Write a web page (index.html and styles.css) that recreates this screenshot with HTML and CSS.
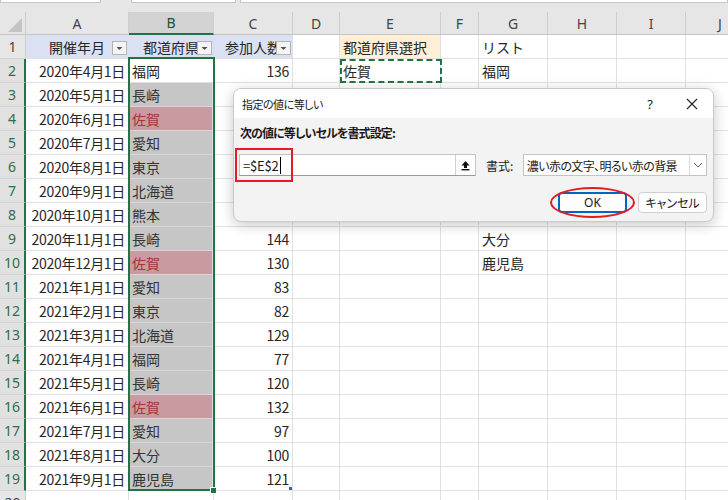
FILE: index.html
```html
<!DOCTYPE html>
<html lang="ja">
<head>
<meta charset="utf-8">
<link rel="stylesheet" href="styles.css">
</head>
<body>
<div class="page">
  <div class="topbar">
    <div class="tb tb1"></div>
    <div class="tb tb2"></div>
    <div class="tb tb3"></div>
  </div>
  <div class="sheet">
    <div class="corner"><svg width="26" height="23" viewBox="0 0 26 23"><polygon points="22,6 22,20 8,20" fill="#c4c4c4"/></svg></div>
    <div class="ch">A</div><div class="ch chs">B</div><div class="ch">C</div><div class="ch">D</div><div class="ch">E</div><div class="ch">F</div><div class="ch">G</div><div class="ch">H</div><div class="ch">I</div><div class="ch">J</div>

    <div class="rh">1</div>
    <div class="c th">開催年月<span class="flt"><svg width="13" height="12" viewBox="0 0 13 12"><polygon points="3.5,5 9.5,5 6.5,8" fill="#555"/></svg></span></div>
    <div class="c th">都道府県<span class="flt"><svg width="13" height="12" viewBox="0 0 13 12"><polygon points="3.5,5 9.5,5 6.5,8" fill="#555"/></svg></span></div>
    <div class="c th">参加人数<span class="flt"><svg width="13" height="12" viewBox="0 0 13 12"><polygon points="3.5,5 9.5,5 6.5,8" fill="#555"/></svg></span></div>
    <div class="c"></div><div class="c sel-hd">都道府県選択</div><div class="c"></div><div class="c">リスト</div><div class="c"></div><div class="c"></div><div class="c"></div>

    <div class="rh s">2</div><div class="c r">2020年4月1日</div><div class="c">福岡</div><div class="c r">136</div><div class="c"></div><div class="c">佐賀</div><div class="c"></div><div class="c">福岡</div><div class="c"></div><div class="c"></div><div class="c"></div>
    <div class="rh s">3</div><div class="c r">2020年5月1日</div><div class="c g">長崎</div><div class="c r"></div><div class="c"></div><div class="c"></div><div class="c"></div><div class="c">長崎</div><div class="c"></div><div class="c"></div><div class="c"></div>
    <div class="rh s">4</div><div class="c r">2020年6月1日</div><div class="c g red">佐賀</div><div class="c r"></div><div class="c"></div><div class="c"></div><div class="c"></div><div class="c"></div><div class="c"></div><div class="c"></div><div class="c"></div>
    <div class="rh s">5</div><div class="c r">2020年7月1日</div><div class="c g">愛知</div><div class="c r"></div><div class="c"></div><div class="c"></div><div class="c"></div><div class="c"></div><div class="c"></div><div class="c"></div><div class="c"></div>
    <div class="rh s">6</div><div class="c r">2020年8月1日</div><div class="c g">東京</div><div class="c r"></div><div class="c"></div><div class="c"></div><div class="c"></div><div class="c"></div><div class="c"></div><div class="c"></div><div class="c"></div>
    <div class="rh s">7</div><div class="c r">2020年9月1日</div><div class="c g">北海道</div><div class="c r"></div><div class="c"></div><div class="c"></div><div class="c"></div><div class="c"></div><div class="c"></div><div class="c"></div><div class="c"></div>
    <div class="rh s">8</div><div class="c r">2020年10月1日</div><div class="c g">熊本</div><div class="c r"></div><div class="c"></div><div class="c"></div><div class="c"></div><div class="c"></div><div class="c"></div><div class="c"></div><div class="c"></div>
    <div class="rh s">9</div><div class="c r">2020年11月1日</div><div class="c g">長崎</div><div class="c r">144</div><div class="c"></div><div class="c"></div><div class="c"></div><div class="c">大分</div><div class="c"></div><div class="c"></div><div class="c"></div>
    <div class="rh s">10</div><div class="c r">2020年12月1日</div><div class="c g red">佐賀</div><div class="c r">130</div><div class="c"></div><div class="c"></div><div class="c"></div><div class="c">鹿児島</div><div class="c"></div><div class="c"></div><div class="c"></div>
    <div class="rh s">11</div><div class="c r">2021年1月1日</div><div class="c g">愛知</div><div class="c r">83</div><div class="c"></div><div class="c"></div><div class="c"></div><div class="c"></div><div class="c"></div><div class="c"></div><div class="c"></div>
    <div class="rh s">12</div><div class="c r">2021年2月1日</div><div class="c g">東京</div><div class="c r">82</div><div class="c"></div><div class="c"></div><div class="c"></div><div class="c"></div><div class="c"></div><div class="c"></div><div class="c"></div>
    <div class="rh s">13</div><div class="c r">2021年3月1日</div><div class="c g">北海道</div><div class="c r">129</div><div class="c"></div><div class="c"></div><div class="c"></div><div class="c"></div><div class="c"></div><div class="c"></div><div class="c"></div>
    <div class="rh s">14</div><div class="c r">2021年4月1日</div><div class="c g">福岡</div><div class="c r">77</div><div class="c"></div><div class="c"></div><div class="c"></div><div class="c"></div><div class="c"></div><div class="c"></div><div class="c"></div>
    <div class="rh s">15</div><div class="c r">2021年5月1日</div><div class="c g">長崎</div><div class="c r">120</div><div class="c"></div><div class="c"></div><div class="c"></div><div class="c"></div><div class="c"></div><div class="c"></div><div class="c"></div>
    <div class="rh s">16</div><div class="c r">2021年6月1日</div><div class="c g red">佐賀</div><div class="c r">132</div><div class="c"></div><div class="c"></div><div class="c"></div><div class="c"></div><div class="c"></div><div class="c"></div><div class="c"></div>
    <div class="rh s">17</div><div class="c r">2021年7月1日</div><div class="c g">愛知</div><div class="c r">97</div><div class="c"></div><div class="c"></div><div class="c"></div><div class="c"></div><div class="c"></div><div class="c"></div><div class="c"></div>
    <div class="rh s">18</div><div class="c r">2021年8月1日</div><div class="c g">大分</div><div class="c r">100</div><div class="c"></div><div class="c"></div><div class="c"></div><div class="c"></div><div class="c"></div><div class="c"></div><div class="c"></div>
    <div class="rh s">19</div><div class="c r">2021年9月1日</div><div class="c g">鹿児島</div><div class="c r">121<span class="tmark"></span></div><div class="c"></div><div class="c"></div><div class="c"></div><div class="c"></div><div class="c"></div><div class="c"></div><div class="c"></div>
    <div class="rh">20</div><div class="c"></div><div class="c"></div><div class="c"></div><div class="c"></div><div class="c"></div><div class="c"></div><div class="c"></div><div class="c"></div><div class="c"></div><div class="c"></div>
  </div>

  <div class="selbox"></div>
  <div class="fillh"></div>
  <div class="ants"></div>

  <div class="dlg">
    <div class="dlg-title">
      <span class="dlg-name">指定の値に等しい</span>
      <span class="dlg-q">?</span>
      <svg class="dlg-x" width="12" height="12" viewBox="0 0 12 12"><path d="M1 1 L11 11 M11 1 L1 11" stroke="#222" stroke-width="1.1"/></svg>
    </div>
    <div class="dlg-body">
      <div class="dlg-lbl">次の値に等しいセルを書式設定:</div>
      <div class="dlg-row">
        <div class="inp">
          <span class="inp-text">=$E$2</span><span class="caret"></span>
          <span class="refbtn"><svg width="11" height="11" viewBox="0 0 11 11"><path d="M5.5 1 L9.5 5.5 L7 5.5 L7 8 L4 8 L4 5.5 L1.5 5.5 Z" fill="#111"/><rect x="1.5" y="9" width="8" height="1.4" fill="#111"/></svg></span>
        </div>
        <span class="fmt-lbl">書式:</span>
        <div class="sel">
          <span class="sel-text">濃い赤の文字、明るい赤の背景</span>
          <span class="chev"><svg width="10" height="6" viewBox="0 0 10 6"><path d="M1 1 L5 5 L9 1" fill="none" stroke="#666" stroke-width="1"/></svg></span>
        </div>
      </div>
      <div class="dlg-btns">
        <span class="btn btn-ok">OK</span>
        <span class="btn">キャンセル</span>
      </div>
    </div>
  </div>

  <div class="anno-rect"></div>
  <div class="anno-ell"></div>
</div>
</body>
</html>
```
FILE: styles.css
```css
* { box-sizing: border-box; }
html, body { margin: 0; padding: 0; background: #fff; }
body { width: 728px; height: 500px; overflow: hidden; }
.page {
  position: relative;
  width: 728px;
  height: 500px;
  overflow: hidden;
  font-family: "Noto Sans CJK JP", sans-serif;
  color: #262626;
}
.topbar {
  height: 12px;
  background: #e6e6e6;
  display: flex;
  align-items: flex-start;
}
.tb {
  height: 3px;
  background: #fff;
  border: 1px solid #c6c6c6;
  border-top: none;
}
.tb1 { width: 101px; }
.tb2 { width: 105px; margin-left: 30px; }
.tb3 { flex: 1; margin-left: 4px; }

.sheet {
  display: grid;
  grid-template-columns: 26px 103px 85px 79px 47px 101px 38px 69px 69px 69px 69px;
  grid-template-rows: 23px repeat(20, 24px);
  width: 755px;
}
.corner {
  background: #e6e6e6;
  border-right: 1px solid #cfcfcf;
  border-bottom: 1px solid #c4c4c4;
}
.corner svg { display: block; }
.ch {
  background: #e6e6e6;
  border-right: 1px solid #cfcfcf;
  border-bottom: 1px solid #c4c4c4;
  display: flex;
  align-items: center;
  justify-content: center;
  font-family: "Noto Sans", sans-serif;
  font-size: 14px;
  color: #444;
}
.chs {
  background: #d2d2d2;
  border-bottom: 2px solid #217346;
  color: #1d4f33;
}
.rh {
  background: #e6e6e6;
  border-right: 1px solid #cfcfcf;
  border-bottom: 1px solid #d4d4d4;
  display: flex;
  align-items: center;
  justify-content: center;
  font-family: "Noto Sans", sans-serif;
  font-size: 14px;
  color: #444;
}
.rh.s {
  background: #e1e1e1;
  color: #2f6e4a;
  border-right: 2px solid #217346;
}
.c {
  position: relative;
  border-right: 1px solid #e1e1e1;
  border-bottom: 1px solid #e1e1e1;
  display: flex;
  align-items: center;
  padding: 0 3px;
  white-space: nowrap;
  overflow: hidden;
  font-size: 14px;
  line-height: 1;
}
.c.r { justify-content: flex-end; overflow: visible; letter-spacing: -0.3px; }
.c.th {
  background: #d9e1f2;
  justify-content: center;
  overflow: visible;
  border-right-color: #d9e1f2;
  border-bottom-color: #e1e1e1;
}
.sel-hd { background: #fdf0d6; }
.c.g {
  background: #c6c6c6;
  color: #333;
  border-bottom-color: #d6d6d6;
  margin-right: 1px;
}
.c.g.red {
  background: #c99aa0;
  color: #a6343b;
}
.flt {
  position: absolute;
  right: 1px;
  top: 6px;
  width: 15px;
  height: 14px;
  background: #f4f4f4;
  border: 1px solid #b4b4b4;
  display: flex;
  align-items: center;
  justify-content: center;
}
.flt svg { display: block; }
.tmark {
  position: absolute;
  right: 0;
  bottom: 0;
  width: 3px;
  height: 3px;
  background: #3b5bbf;
}

.selbox {
  position: absolute;
  left: 128px;
  top: 57px;
  width: 87px;
  height: 434px;
  border: 2px solid #217346;
}
.fillh {
  position: absolute;
  left: 210px;
  top: 487px;
  width: 7px;
  height: 7px;
  background: #217346;
  border: 1px solid #fff;
}
.ants {
  position: absolute;
  left: 340px;
  top: 59px;
  width: 102px;
  height: 24px;
  border: 2px dashed #217346;
}

.dlg {
  position: absolute;
  left: 233px;
  top: 88px;
  width: 481px;
  height: 134px;
  border-radius: 8px;
  border: 1px solid #c9c9c9;
  box-shadow: 0 3px 14px rgba(0, 0, 0, 0.22);
  overflow: hidden;
  background: #f3f3f3;
  font-family: "Noto Sans CJK JP", sans-serif;
  font-feature-settings: "palt";
  color: #1a1a1a;
}
.dlg-title {
  height: 29px;
  background: #fff;
  display: flex;
  align-items: center;
  padding-left: 8px;
}
.dlg-name { font-size: 11px; flex: 1; letter-spacing: -0.5px; }
.dlg-q { font-size: 13px; margin-right: 33px; font-family: "Noto Sans", sans-serif; }
.dlg-x { margin-right: 15px; }
.dlg-body {
  padding: 6px 6px 0 5px;
}
.dlg-lbl {
  font-size: 12px;
  font-weight: bold;
  line-height: 18px;
  padding-left: 1px;
  letter-spacing: -0.9px;
}
.dlg-row {
  margin-top: 12px;
  display: flex;
  align-items: center;
  height: 22px;
}
.inp {
  width: 238px;
  height: 22px;
  background: #fff;
  border: 1px solid #c4c4c4;
  border-bottom-color: #9a9a9a;
  display: flex;
  align-items: center;
  padding-left: 3px;
}
.inp-text {
  font-size: 13px;
  letter-spacing: -0.2px;
}
.caret {
  width: 1px;
  height: 17px;
  background: #000;
  margin-left: 1px;
}
.refbtn {
  margin-left: auto;
  width: 20px;
  height: 20px;
  border-left: 1px solid #d0d0d0;
  background: #fdfdfd;
  display: flex;
  align-items: center;
  justify-content: center;
}
.fmt-lbl {
  font-size: 12px;
  margin-left: 10px;
  width: 37px;
}
.sel {
  width: 185px;
  height: 22px;
  background: #fff;
  border: 1px solid #c4c4c4;
  display: flex;
  align-items: center;
  padding-left: 3px;
}
.sel-text { font-size: 12px; letter-spacing: -0.6px; }
.chev {
  margin-left: auto;
  width: 17px;
  height: 20px;
  border-left: 1px solid #dcdcdc;
  display: flex;
  align-items: center;
  justify-content: center;
}
.dlg-btns {
  margin-top: 16px;
  display: flex;
  justify-content: flex-end;
  gap: 11px;
  padding-right: 0;
}
.btn {
  width: 69px;
  height: 21px;
  border: 1px solid #d0d0d0;
  border-radius: 4px;
  background: #fdfdfd;
  display: flex;
  align-items: center;
  justify-content: center;
  font-size: 12px;
}
.btn-ok {
  border: 2px solid #0067c0;
  font-family: "Noto Sans", sans-serif;
  font-size: 12px;
}

.anno-rect {
  position: absolute;
  left: 235px;
  top: 148px;
  width: 58px;
  height: 34px;
  border: 2px solid #e51c23;
}
.anno-ell {
  position: absolute;
  left: 550px;
  top: 187px;
  width: 85px;
  height: 31px;
  border: 2px solid #e51c23;
  border-radius: 50%;
}
```
